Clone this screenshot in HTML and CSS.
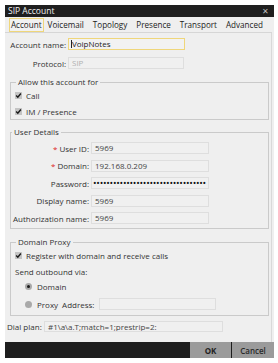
FILE: index.html
```html
<!DOCTYPE html>
<html>
<head>
<meta charset="utf-8">
<link rel="stylesheet" href="styles.css">
</head>
<body>
<div class="window">
  <div class="titlebar"><span class="title">SIP Account</span><span class="close">✕</span></div>
  <div class="tabs">
    <span class="tab active">Account</span>
    <span class="tab">Voicemail</span>
    <span class="tab">Topology</span>
    <span class="tab">Presence</span>
    <span class="tab">Transport</span>
    <span class="tab">Advanced</span>
  </div>
  <div class="panel">
    <div class="toprows">
      <div class="row"><span class="lbl lbl-top">Account name:</span><span class="input focus w-acc"><span class="caret"></span>VoipNotes</span></div>
      <div class="row"><span class="lbl lbl-top">Protocol:</span><span class="input disabled w-proto">SIP</span></div>
    </div>

    <fieldset class="group g1">
      <legend>Allow this account for</legend>
      <div class="crow"><span class="check"><svg viewBox="0 0 7 7" width="7" height="7"><path d="M1.2 3.6 L2.8 5.3 L5.9 1.5" fill="none" stroke="#1a1a1a" stroke-width="1.4"/></svg></span>Call</div>
      <div class="crow"><span class="check"><svg viewBox="0 0 7 7" width="7" height="7"><path d="M1.2 3.6 L2.8 5.3 L5.9 1.5" fill="none" stroke="#1a1a1a" stroke-width="1.4"/></svg></span>IM / Presence</div>
    </fieldset>

    <fieldset class="group g2">
      <legend>User Details</legend>
      <div class="row"><span class="lbl lbl-ud"><span class="req">*</span> User ID:</span><span class="input w-ud">5969</span></div>
      <div class="row"><span class="lbl lbl-ud"><span class="req">*</span> Domain:</span><span class="input w-ud">192.168.0.209</span></div>
      <div class="row"><span class="lbl lbl-ud">Password:</span><span class="input w-ud pw">••••••••••••••••••••••••••••••••••</span></div>
      <div class="row"><span class="lbl lbl-ud">Display name:</span><span class="input w-ud">5969</span></div>
      <div class="row"><span class="lbl lbl-ud">Authorization name:</span><span class="input w-ud">5969</span></div>
    </fieldset>

    <fieldset class="group g3">
      <legend>Domain Proxy</legend>
      <div class="crow r-reg"><span class="check"><svg viewBox="0 0 7 7" width="7" height="7"><path d="M1.2 3.6 L2.8 5.3 L5.9 1.5" fill="none" stroke="#1a1a1a" stroke-width="1.4"/></svg></span>Register with domain and receive calls</div>
      <div class="crow r-send">Send outbound via:</div>
      <div class="crow r-dom"><span class="radio on"></span>Domain</div>
      <div class="crow r-proxy"><span class="radio"></span>Proxy<span class="addr">Address:</span><span class="input w-addr"></span></div>
    </fieldset>

    <div class="row dial"><span class="lbl-dial">Dial plan:</span><span class="input w-dial">#1\a\a.T;match=1;prestrip=2:</span></div>
  </div>
  <div class="footer">
    <button class="btn ok">OK</button>
    <button class="btn cancel">Cancel</button>
  </div>
</div>
</body>
</html>
```

FILE: styles.css
```css
* { box-sizing: border-box; }
html, body { margin: 0; padding: 0; background: #ffffff; }
body {
  width: 278px;
  height: 363px;
  padding: 5px 4px 5px 5px;
  font-family: "Open Sans", "Noto Sans", "Liberation Sans", sans-serif;
  font-size: 8px;
  color: #333;
}
.window {
  width: 269px;
  height: 353px;
  background: #efefef;
  display: flex;
  flex-direction: column;
}
.titlebar {
  height: 12px;
  background: #1f1f1f;
  color: #f2f2f2;
  display: flex;
  align-items: center;
  justify-content: space-between;
  padding: 0 5px 0 3px;
  font-size: 8.5px;
  line-height: 12px;
}
.close { color: #bdbdbd; font-size: 8px; }
.tabs {
  height: 16px;
  display: flex;
  align-items: flex-end;
  padding: 0 0 0 4px;
  border-bottom: 1px solid #d6d6d6;
  font-size: 8.1px;
  color: #222;
  margin-right: 2px;
}
.tab {
  height: 14px;
  line-height: 12px;
  padding: 0 1px;
  margin-right: 5px;
  border: 1px solid transparent;
  white-space: nowrap;
}
.tab:first-child { margin-right: 2px; }
.tab.active {
  border-color: #efd67a;
  background: #f1f1f1;
}
.panel {
  flex: 1;
  padding: 0 0 0 2px;
  margin-right: 2px;
  border-right: 1px solid #d9d9d9;
  display: flex;
  flex-direction: column;
}
.toprows {
  display: flex;
  flex-direction: column;
  gap: 7px;
  margin-top: 5px;
}
.row {
  display: flex;
  align-items: center;
  height: 12px;
}
.lbl {
  text-align: right;
  white-space: nowrap;
  color: #333;
}
.lbl-top { width: 59px; margin-right: 2px; }
.lbl-ud { width: 78px; margin-right: 2px; }
.req { color: #d22; }
.input {
  height: 12px;
  line-height: 10px;
  background: #f0f0f0;
  border: 1px solid #dedede;
  padding: 0 3px;
  color: #444;
  white-space: nowrap;
  overflow: hidden;
  display: flex;
  align-items: center;
}
.input.focus {
  border-color: #efd67a;
  background: #f2f2f2;
  color: #222;
  padding-left: 2px;
}
.caret {
  display: inline-block;
  width: 1px;
  height: 8px;
  background: #222;
}
.input.disabled { color: #b0b0b0; }
.w-acc { width: 117px; }
.w-proto { width: 116px; }
.w-ud { width: 118px; }
.w-addr { width: 117px; }
.w-dial { width: 179px; height: 11px; }
.pw {
  color: #111;
  font-size: 9.5px;
  letter-spacing: -0.25px;
  padding-left: 1px;
}
.group {
  margin: 0;
  border: 1px solid #cacaca;
  padding: 0 0 0 4px;
  width: 259px;
  margin-left: 3px;
}
.group legend {
  padding: 0 2px;
  margin-left: 1px;
  font-size: 8px;
  line-height: 10px;
  color: #333;
}
.g1 { margin-top: 8px; padding-top: 1px; padding-bottom: 1px; display: flex; flex-direction: column; gap: 2px; }
.g1 .crow { height: 14px; }
.g2 { margin-top: 7px; padding: 5px 0 4px 0; display: flex; flex-direction: column; gap: 5.6px; }
.g3 { margin-top: 8px; padding: 2px 0 5px 4px; }
.crow {
  display: flex;
  align-items: center;
  height: 12px;
  white-space: nowrap;
  color: #333;
}
.r-send { margin-top: 4px; }
.r-dom { margin-top: 3px; padding-left: 10px; }
.r-proxy { margin-top: 6px; padding-left: 10px; }
.check {
  width: 7px;
  height: 7px;
  background: #c4c4c4;
  margin-right: 4px;
  display: inline-flex;
}
.check svg { display: block; }
.radio {
  width: 7px;
  height: 7px;
  border-radius: 50%;
  background: #a9a9a9;
  margin-right: 5px;
  position: relative;
  display: inline-block;
}
.radio.on::after {
  content: "";
  position: absolute;
  left: 2px;
  top: 2px;
  width: 3px;
  height: 3px;
  border-radius: 50%;
  background: #1a1a1a;
}
.addr { margin-left: 4px; margin-right: 5px; }
.dial { margin-top: 5px; height: 11px; }
.lbl-dial { width: 37px; color: #333; }
.footer {
  margin-top: auto;
  height: 16px;
  background: #1e1e1e;
  display: flex;
  justify-content: flex-end;
}
.btn {
  font-family: "Open Sans", "Noto Sans", "Liberation Sans", sans-serif;
  font-size: 8px;
  height: 16px;
  width: 42px;
  margin: 0;
  padding: 0;
  border: none;
  background: #9b9b9b;
  color: #1f1f1f;
  font-weight: 700;
}
.btn.ok { width: 41px; margin-right: 1px; }
.btn.cancel { width: 42px; font-weight: 600; color: #2a2a2a; }
```
